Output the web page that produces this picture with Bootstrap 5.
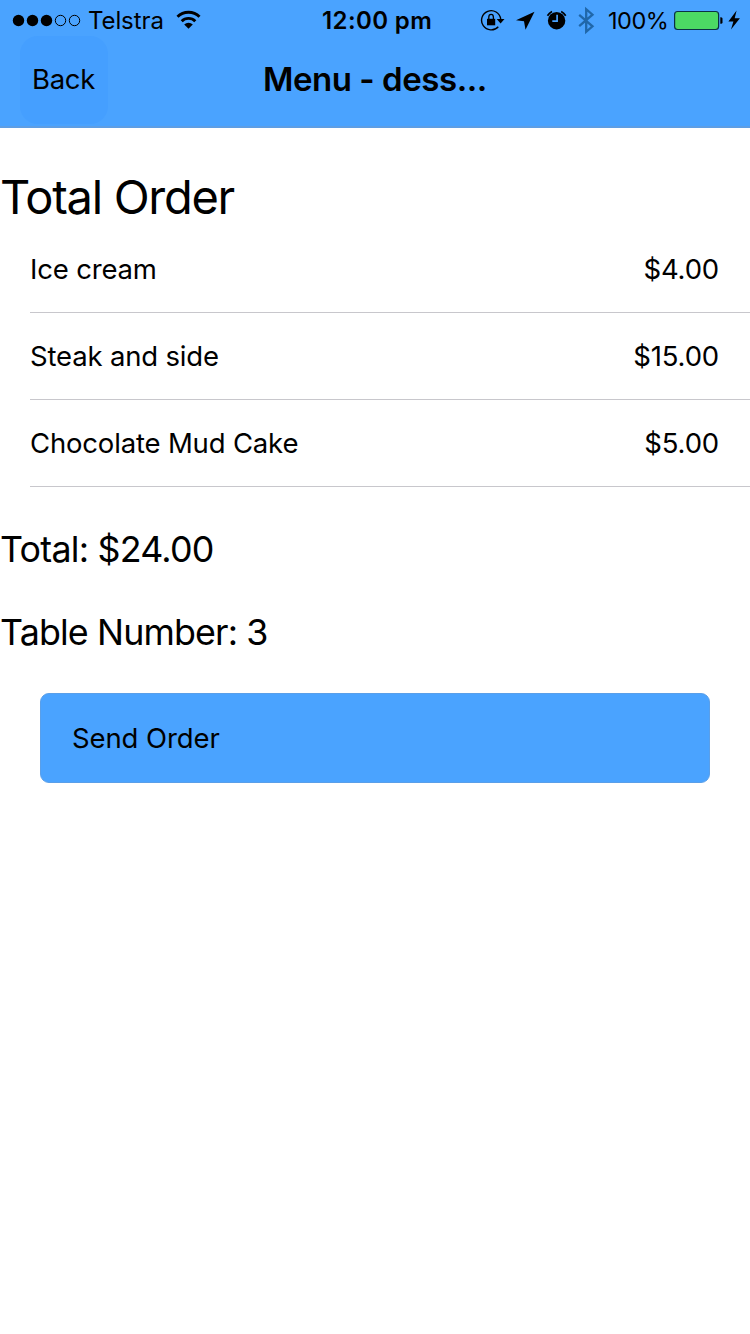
<!DOCTYPE html>
<html lang="en">
<head>
<meta charset="utf-8">
<meta name="viewport" content="width=device-width, initial-scale=1">
<title>Menu - Total Order</title>
<link href="https://cdn.jsdelivr.net/npm/bootstrap@5.3.0/dist/css/bootstrap.min.css" rel="stylesheet">
<style>
  body { font-family: Inter, "Liberation Sans", sans-serif; font-size: 27.5px; line-height: 1.2; letter-spacing: -.17px; color: #000; background: #fff; min-height: 1334px; }
  .top-area { height: 128px; background: #4aa3ff; border-bottom: 2px solid #5e9ee4; }
  .status { height: 40px; font-size: 24px; letter-spacing: -.1px; display: grid; grid-template-columns: 322px 158px 127px 1fr; align-items: center; }
  .status svg { display: block; flex: none; }
  .clock { letter-spacing: .4px; padding-top: 3px; }
  .battery-text { font-size: 23.5px; letter-spacing: -.5px; width: 61px; padding: 2px 0 0 1px; }
  .carrier { padding-top: 3px; width: 84px; }
  .toolbar { height: 80px; display: grid; grid-template-columns: 263px 1fr; }
  .btn-back { width: 88px; height: 88px; margin: -4px 0 0 20px; padding: 0 1px 0 0; border: 0; border-radius: 18px; background: #459fff; font-size: 27.5px; letter-spacing: -.3px; color: #000; }
  .bar-title { font-size: 33px; font-weight: 600; letter-spacing: -.46px; margin-top: -5px; }
  .page-heading { font-size: 47px; line-height: 58px; letter-spacing: -1.3px; margin-top: 40px; font-weight: 400; }
  .order-list { margin-left: 30px; }
  .order-list > .order-row, .order-list > .order-row:last-child { height: 87px; padding: 0 31px 0 0; border: 0; border-bottom: 1px solid #c8c7cc; background: none; color: #000; }
  .summary { font-size: 35.8px; line-height: 44px; letter-spacing: -.85px; margin-top: 39px; }
  .order-list + .summary { margin-top: 40px; letter-spacing: -.76px; }
  .send-wrap { margin: 39px 40px 0; }
  .btn-send { height: 90px; padding: 1px 31px 0; border: 1px solid #5a9fe9; border-radius: 9px; background: #4aa3ff; font-size: 27.5px; letter-spacing: -.1px; color: #000; text-align: left; }
</style>
</head>
<body>
<header class="top-area">
  <div class="status">
    <div class="d-flex align-items-center">
      <svg width="88" height="40" viewBox="0 0 88 40"><circle cx="18.5" cy="20.5" r="5.7"/><circle cx="32.5" cy="20.5" r="5.7"/><circle cx="46.5" cy="20.5" r="5.7"/><g fill="none" stroke="#000"><circle cx="60.5" cy="20.5" r="5.2"/><circle cx="74.5" cy="20.5" r="5.2"/></g></svg>
      <span class="carrier">Telstra</span>
      <svg width="40" height="40" viewBox="172 0 40 40"><g fill="none" stroke="#000" stroke-width="2.9"><path d="M177.500 16.800a15.500 15.500 0 0 1 22 0"/><path d="M181.700 21.200a9.600 9.600 0 0 1 13.600 0"/></g><path d="M188.500 28.800l-4.300-4.200a6.200 6.200 0 0 1 8.600 0z"/></svg>
    </div>
    <span class="clock fw-semibold">12:00 pm</span>
    <svg width="127" height="40" viewBox="480 0 127 40">
      <!-- rotation lock -->
      <path d="M498.300 26.700A9.600 9.600 0 1 1 500.700 19" fill="none" stroke="#000" stroke-width="1.400"/>
      <path d="M496.700 18.900h7.800l-3.900 4.500z"/>
      <path d="M487 18.800h8.200v6.500H487z"/><path d="M488.800 19.500v-2.300a2.300 2.800 0 0 1 4.600 0v2.300" fill="none" stroke="#000" stroke-width="1.300"/>
      <!-- location -->
      <path d="M534.500 11.700L525.500 29.700l-1.500-8.400-8-1z"/>
      <!-- alarm -->
      <circle cx="556.600" cy="20.700" r="8.700"/><path d="M547.500 15.800a11 11 0 0 1 4.500-4.200M561.200 11.600a11 11 0 0 1 4.500 4.200" fill="none" stroke="#000" stroke-width="1.700"/><path d="M557.100 14.800v6.400h-4.800" fill="none" stroke="#4aa3ff" stroke-width="1.700"/>
      <!-- bluetooth -->
      <path d="M579.200 14.800l13.300 11.500-6.300 5.500V9.200l6.300 5.500-13.300 11.500" fill="none" stroke="#2067a9" stroke-width="2.300"/>
    </svg>
    <div class="d-flex align-items-center">
      <span class="battery-text">100%</span>
      <svg width="82" height="40" viewBox="668 0 82 40">
        <rect x="674.600" y="11.500" width="44" height="18" rx="3" fill="#4cd964" stroke="#0a3044" stroke-width="1.200"/>
        <path d="M720.300 17.300h.7q1.500 0 1.500 1.500v3.400q0 1.500-1.500 1.500h-.7z"/>
        <path d="M736.600 10.400l-8.200 11h5l-2.400 8.200 8.900-11.300h-5.200z"/>
      </svg>
    </div>
  </div>
  <nav class="toolbar align-items-center">
    <button class="btn btn-back" type="button">Back</button>
    <div class="bar-title">Menu - dess...</div>
  </nav>
</header>
<main>
  <h1 class="page-heading mb-0">Total Order</h1>
  <ul class="list-group list-group-flush order-list">
    <li class="list-group-item order-row d-flex justify-content-between align-items-center"><span>Ice cream</span><span>$4.00</span></li>
    <li class="list-group-item order-row d-flex justify-content-between align-items-center"><span>Steak and side</span><span>$15.00</span></li>
    <li class="list-group-item order-row d-flex justify-content-between align-items-center"><span>Chocolate Mud Cake</span><span>$5.00</span></li>
  </ul>
  <p class="summary mb-0">Total: $24.00</p>
  <p class="summary mb-0">Table Number: 3</p>
  <div class="send-wrap d-grid"><button class="btn btn-send" type="button">Send Order</button></div>
</main>
<script src="https://cdn.jsdelivr.net/npm/bootstrap@5.3.0/dist/js/bootstrap.bundle.min.js"></script>
</body>
</html>
